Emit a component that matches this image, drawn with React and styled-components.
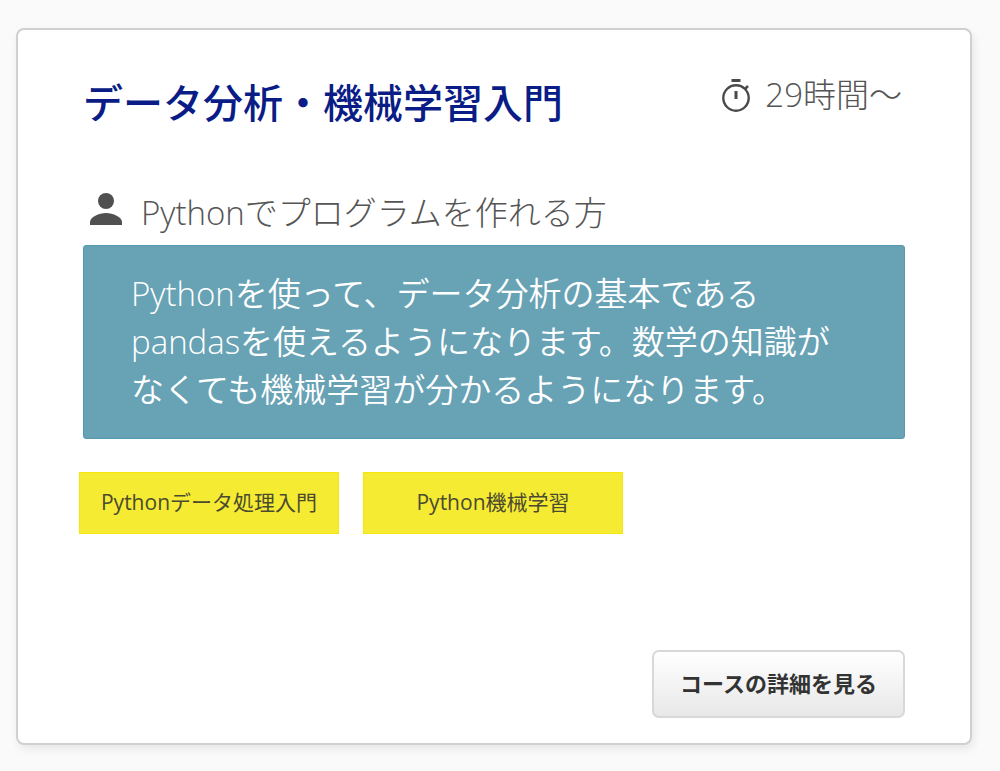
import React from 'react';
import styled, { createGlobalStyle } from 'styled-components';

const Global = createGlobalStyle`
  * { box-sizing: border-box; }
  body {
    margin: 0;
    background: #fafafa;
    color: #555;
    font-family: "Open Sans", "Noto Sans CJK JP", sans-serif;
    font-weight: 300;
  }
`;

const Page = styled.main`
  padding: 28px 28px 26px 16px;
`;

const Card = styled.article`
  display: flex;
  flex-direction: column;
  min-height: 717px;
  padding: 41px 65px 25px;
  background: #fff;
  border: 2px solid #d0d0d0;
  border-radius: 8px;
  box-shadow: 2px 4px 8px rgba(0, 0, 0, 0.08);
`;

const Header = styled.header`
  display: flex;
  justify-content: space-between;
  align-items: flex-start;
`;

const Title = styled.h2`
  margin: 0;
  padding-top: 4px;
  color: #0a1c86;
  font-size: 40px;
  line-height: 56px;
  font-weight: 500;
`;

const Duration = styled.p`
  display: flex;
  align-items: center;
  gap: 14px;
  margin: 0;
  padding-right: 3px;
  font-size: 33px;
  line-height: 48px;
`;

const Audience = styled.p`
  display: flex;
  align-items: center;
  gap: 18px;
  margin: 58px 0 8px;
  padding-left: 6px;
  font-size: 33px;
  line-height: 48px;
`;

const PersonIcon = styled.svg`
  flex: none;
  margin-bottom: 8px;
`;

const Summary = styled.p`
  margin: 0;
  padding: 24px 47px;
  background: #67a2b5;
  border: 1px solid #559ab0;
  border-radius: 3px;
  color: #fff;
  font-size: 33px;
  font-weight: 350;
  line-height: 48px;
`;

const Tags = styled.ul`
  display: flex;
  flex-wrap: wrap;
  gap: 24px;
  margin: 33px 0 0 -4px;
  padding: 0;
  list-style: none;
`;

const Tag = styled.li`
  width: 260px;
  padding-bottom: 2px;
  background: #f6eb33;
  border: 1px solid #f7e60c;
  color: #4a4a30;
  font-size: 21px;
  line-height: 58px;
  font-weight: 400;
  text-align: center;
`;

const DetailButton = styled.button`
  align-self: flex-end;
  margin-top: auto;
  width: 253px;
  height: 68px;
  padding: 0 0 4px;
  border: 2px solid #d8d8d8;
  border-radius: 7px;
  background: linear-gradient(#fff, #e8e8e8);
  color: #333;
  font: 700 22px "Noto Sans CJK JP", sans-serif;
`;

export default function App() {
  return (
    <>
      <Global />
      <Page>
        <Card>
          <Header>
            <Title>データ分析・機械学習入門</Title>
            <Duration>
              <svg width="30" height="34" viewBox="0 0 30 34" fill="none" stroke="#4a4a4a" aria-hidden="true">
                <path d="M10.500 2.500h9M15 13v8" strokeWidth="3" />
                <path d="M24 11l3-3" strokeWidth="2.500" />
                <circle cx="15" cy="20" r="12.700" strokeWidth="2.400" />
              </svg>
              29時間〜
            </Duration>
          </Header>
          <Audience>
            <PersonIcon width="34" height="34" viewBox="0 0 34 34" fill="#505050" aria-hidden="true">
              <circle cx="17" cy="9" r="8" />
              <path d="M1 33v-3c0-5 9-9 16-9s16 4 16 9v3z" />
            </PersonIcon>
            Pythonでプログラムを作れる方
          </Audience>
          <Summary>
            Pythonを使って、データ分析の基本である<br />
            pandasを使えるようになります。数学の知識が<br />
            なくても機械学習が分かるようになります。
          </Summary>
          <Tags>
            <Tag>Pythonデータ処理入門</Tag>
            <Tag>Python機械学習</Tag>
          </Tags>
          <DetailButton type="button">コースの詳細を見る</DetailButton>
        </Card>
      </Page>
    </>
  );
}
